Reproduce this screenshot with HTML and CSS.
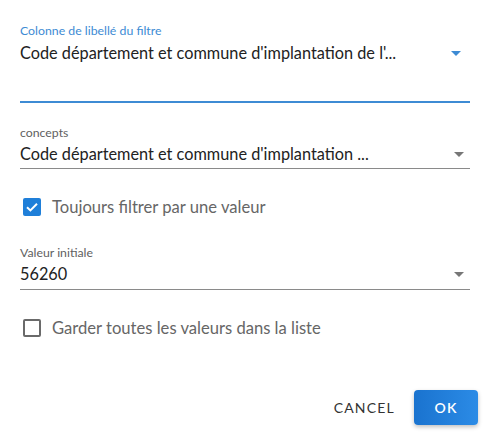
FILE: index.html
```html
<!DOCTYPE html>
<html lang="fr">
<head>
<meta charset="utf-8">
<title>Filtre</title>
<link rel="stylesheet" href="styles.css">
</head>
<body>
<div class="dialog">
  <div class="content">
    <div class="field field-focused">
      <div class="label label-blue">Colonne de libellé du filtre</div>
      <div class="select select-tall">
        <span class="value">Code département et commune d'implantation de l'...</span>
        <svg class="arrow" width="10" height="5" viewBox="0 0 10 5"><path d="M0 0 L10 0 L5 5 Z" fill="#3d8bd4"/></svg>
      </div>
    </div>

    <div class="field field-2">
      <div class="label">concepts</div>
      <div class="select">
        <span class="value">Code département et commune d'implantation ...</span>
        <svg class="arrow arrow-grey" width="10" height="5" viewBox="0 0 10 5"><path d="M0 0 L10 0 L5 5 Z" fill="#777"/></svg>
      </div>
    </div>

    <label class="check check-1">
      <span class="box box-on">
        <svg width="18" height="18" viewBox="0 0 18 18"><path d="M4 9.2 L7.4 12.4 L14 5.8" fill="none" stroke="#fff" stroke-width="2"/></svg>
      </span>
      <span class="check-text">Toujours filtrer par une valeur</span>
    </label>

    <div class="field field-3">
      <div class="label">Valeur initiale</div>
      <div class="select">
        <span class="value">56260</span>
        <svg class="arrow arrow-grey" width="10" height="5" viewBox="0 0 10 5"><path d="M0 0 L10 0 L5 5 Z" fill="#777"/></svg>
      </div>
    </div>

    <label class="check check-2">
      <span class="box box-off"></span>
      <span class="check-text">Garder toutes les valeurs dans la liste</span>
    </label>
  </div>

  <div class="actions">
    <button class="btn btn-text">CANCEL</button>
    <button class="btn btn-primary">OK</button>
  </div>
</div>
</body>
</html>
```

FILE: styles.css
```css
html, body {
  margin: 0;
  padding: 0;
  background: #fff;
}
body {
  font-family: Lato, "Open Sans", sans-serif;
  color: rgba(0,0,0,0.87);
  width: 490px;
  height: 433px;
  overflow: hidden;
}
.dialog {
  display: flex;
  flex-direction: column;
  height: 433px;
}
.content {
  padding: 24px 20px 0 20px;
  display: flex;
  flex-direction: column;
}
.field {
  display: flex;
  flex-direction: column;
}
.label {
  font-size: 12.3px;
  line-height: 14px;
  color: #5f5f5f;
  height: 14px;
}
.label-blue {
  color: #3d8bd4;
}
.select {
  display: flex;
  align-items: flex-start;
  justify-content: space-between;
  border-bottom: 1px solid #8a8a8a;
  padding-top: 5px;
  height: 24px;
}
.select-tall {
  border-bottom: 2px solid #3d8bd4;
  height: 58px;
}
.value {
  font-size: 16.3px;
  line-height: 20px;
  white-space: nowrap;
  color: #222;
}
.arrow {
  margin-top: 8px;
  margin-right: 9px;
  flex: none;
}
.arrow-grey {
  margin-right: 6px;
}
.field-2 {
  margin-top: 23px;
}
.field-2 .select {
  padding-top: 4px;
}
.check {
  display: flex;
  align-items: center;
  padding-left: 3px;
  height: 18px;
}
.check-1 {
  margin-top: 29px;
}
.check-2 {
  margin-top: 29px;
}
.box {
  width: 18px;
  height: 18px;
  box-sizing: border-box;
  border-radius: 2px;
  flex: none;
  display: flex;
}
.box-on {
  background: #1f7fd9;
}
.box-off {
  border: 2px solid #6a6a6a;
}
.check-text {
  margin-left: 11px;
  font-size: 16.6px;
  color: #666;
  white-space: nowrap;
}
.field-3 {
  margin-top: 30px;
}
.field-3 .select {
  padding-top: 4px;
  height: 25px;
}
.actions {
  margin-top: auto;
  display: flex;
  justify-content: flex-end;
  align-items: center;
  gap: 11px;
  padding: 0 12px 8px 0;
}
.btn {
  font-family: Lato, "Open Sans", sans-serif;
  font-size: 14px;
  letter-spacing: 1.2px;
  border: none;
  cursor: pointer;
}
.btn-text {
  background: transparent;
  color: #333;
  height: 35px;
  padding: 0 8px;
}
.btn-primary {
  width: 64px;
  height: 35px;
  border-radius: 4px;
  color: #fff;
  font-weight: 600;
  background: linear-gradient(90deg, #1a73cf, #2b8be6);
  box-shadow: 0 2px 4px rgba(0,0,0,0.25);
}
```
